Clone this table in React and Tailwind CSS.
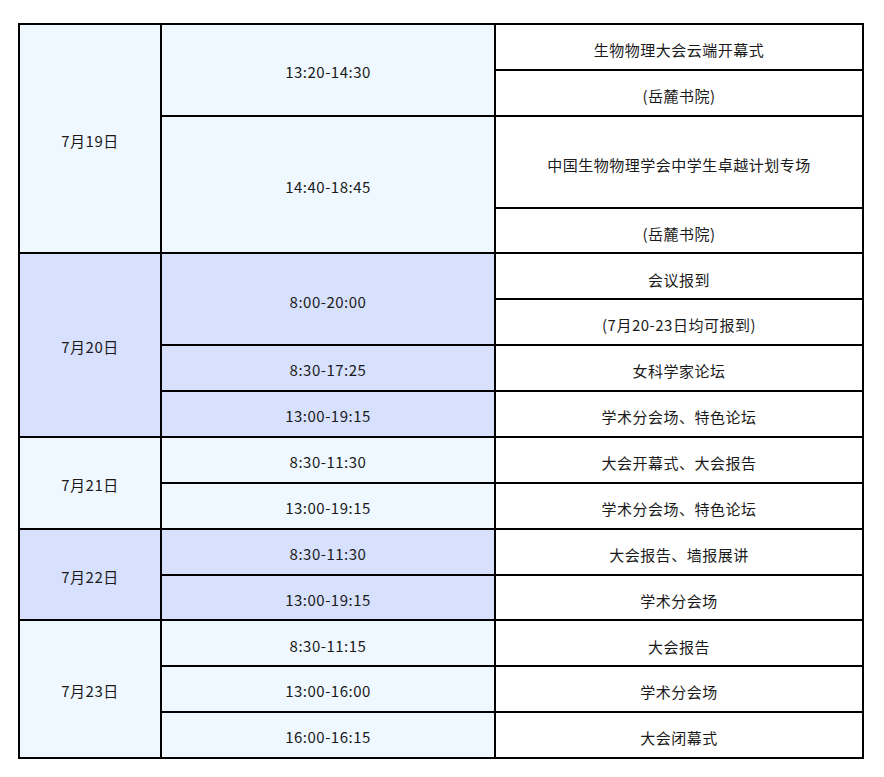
const rows = [
  { date: "7月19日", dateSpan: 4, dateBg: "light", time: "13:20-14:30", timeSpan: 2, event: "生物物理大会云端开幕式" },
  { event: "(岳麓书院)" },
  { time: "14:40-18:45", timeSpan: 2, event: "中国生物物理学会中学生卓越计划专场", tall: true },
  { event: "(岳麓书院)" },
  { date: "7月20日", dateSpan: 4, dateBg: "blue", time: "8:00-20:00", timeSpan: 2, event: "会议报到" },
  { event: "(7月20-23日均可报到)" },
  { time: "8:30-17:25", timeSpan: 1, event: "女科学家论坛" },
  { time: "13:00-19:15", timeSpan: 1, event: "学术分会场、特色论坛" },
  { date: "7月21日", dateSpan: 2, dateBg: "light", time: "8:30-11:30", timeSpan: 1, event: "大会开幕式、大会报告" },
  { time: "13:00-19:15", timeSpan: 1, event: "学术分会场、特色论坛" },
  { date: "7月22日", dateSpan: 2, dateBg: "blue", time: "8:30-11:30", timeSpan: 1, event: "大会报告、墙报展讲" },
  { time: "13:00-19:15", timeSpan: 1, event: "学术分会场" },
  { date: "7月23日", dateSpan: 3, dateBg: "light", time: "8:30-11:15", timeSpan: 1, event: "大会报告" },
  { time: "13:00-16:00", timeSpan: 1, event: "学术分会场" },
  { time: "16:00-16:15", timeSpan: 1, event: "大会闭幕式" },
];

export default function App() {
  let bg = "light";
  return (
    <div
      className="min-h-screen bg-white pl-[18px] pt-[23px] text-[15px] tracking-[0.5px] text-[#1a1a1a]"
      style={{ fontFamily: '"Noto Sans CJK SC", "Noto Sans", sans-serif' }}
    >
      <table className="w-[846px] table-fixed border-separate border-spacing-0 border-l-2 border-t-2 border-black">
        <colgroup>
          <col className="w-[142px]" />
          <col className="w-[334px]" />
          <col className="w-[368px]" />
        </colgroup>
        <tbody>
          {rows.map((r, i) => {
            if (r.date) bg = r.dateBg;
            const cellBg = bg === "blue" ? "bg-[#d7e0fc]" : "bg-[#eff7ff]";
            return (
              <tr key={i} className={r.tall ? "h-[91.75px]" : "h-[45.875px]"}>
                {r.date && (
                  <td
                    rowSpan={r.dateSpan}
                    className={`border-b-2 border-r-2 border-black p-0 pt-[5px] text-center align-middle ${cellBg}`}
                  >
                    {r.date}
                  </td>
                )}
                {r.time && (
                  <td
                    rowSpan={r.timeSpan}
                    className={`border-b-2 border-r-2 border-black p-0 pt-[5px] text-center align-middle ${cellBg}`}
                  >
                    {r.time}
                  </td>
                )}
                <td className="border-b-2 border-r-2 border-black bg-white p-0 pt-[7px] text-center align-middle">
                  {r.event}
                </td>
              </tr>
            );
          })}
        </tbody>
      </table>
    </div>
  );
}
